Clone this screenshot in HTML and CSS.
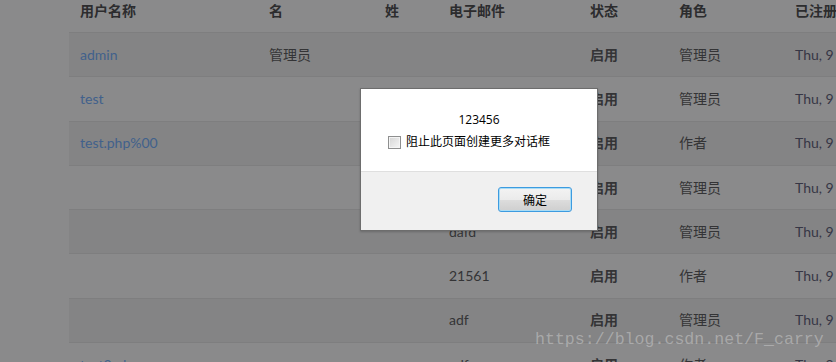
FILE: index.html
```html
<!DOCTYPE html>
<html lang="zh-CN">
<head>
<meta charset="utf-8">
<title>用户</title>
<link rel="stylesheet" href="styles.css">
</head>
<body>
<div class="page">
  <div class="table">
    <div class="row head">
      <div class="c c1">用户名称</div>
      <div class="c c2">名</div>
      <div class="c c3">姓</div>
      <div class="c c4">电子邮件</div>
      <div class="c c5">状态</div>
      <div class="c c6">角色</div>
      <div class="c c7">已注册</div>
    </div>
    <div class="row odd">
      <div class="c c1"><a class="link">admin</a></div>
      <div class="c c2">管理员</div>
      <div class="c c3"></div>
      <div class="c c4"></div>
      <div class="c c5 b">启用</div>
      <div class="c c6">管理员</div>
      <div class="c c7 date">Thu, 9</div>
    </div>
    <div class="row">
      <div class="c c1"><a class="link">test</a></div>
      <div class="c c2"></div>
      <div class="c c3"></div>
      <div class="c c4"></div>
      <div class="c c5 b">启用</div>
      <div class="c c6">管理员</div>
      <div class="c c7 date">Thu, 9</div>
    </div>
    <div class="row odd">
      <div class="c c1"><a class="link">test.php%00</a></div>
      <div class="c c2"></div>
      <div class="c c3"></div>
      <div class="c c4"></div>
      <div class="c c5 b">启用</div>
      <div class="c c6">作者</div>
      <div class="c c7 date">Thu, 9</div>
    </div>
    <div class="row">
      <div class="c c1"></div>
      <div class="c c2"></div>
      <div class="c c3"></div>
      <div class="c c4"></div>
      <div class="c c5 b">启用</div>
      <div class="c c6">管理员</div>
      <div class="c c7 date">Thu, 9</div>
    </div>
    <div class="row odd">
      <div class="c c1"></div>
      <div class="c c2"></div>
      <div class="c c3"></div>
      <div class="c c4">dafd</div>
      <div class="c c5 b">启用</div>
      <div class="c c6">管理员</div>
      <div class="c c7 date">Thu, 9</div>
    </div>
    <div class="row">
      <div class="c c1"></div>
      <div class="c c2"></div>
      <div class="c c3"></div>
      <div class="c c4">21561</div>
      <div class="c c5 b">启用</div>
      <div class="c c6">作者</div>
      <div class="c c7 date">Thu, 9</div>
    </div>
    <div class="row odd">
      <div class="c c1"></div>
      <div class="c c2"></div>
      <div class="c c3"></div>
      <div class="c c4">adf</div>
      <div class="c c5 b">启用</div>
      <div class="c c6">管理员</div>
      <div class="c c7 date">Thu, 9</div>
    </div>
    <div class="row">
      <div class="c c1"><a class="link">test2ad</a></div>
      <div class="c c2"></div>
      <div class="c c3"></div>
      <div class="c c4">adf</div>
      <div class="c c5 b">启用</div>
      <div class="c c6">作者</div>
      <div class="c c7 date">Thu, 9</div>
    </div>
  </div>

  <div class="watermark">https://blog.csdn.net/F_carry</div>

  <div class="dialog">
    <div class="dlg-body">
      <div class="msg">123456</div>
      <label class="chk"><span class="box"></span><span>阻止此页面创建更多对话框</span></label>
    </div>
    <div class="dlg-foot">
      <button class="btn">确定</button>
    </div>
  </div>
</div>
</body>
</html>
```

FILE: styles.css
```css
html, body {
  margin: 0;
  padding: 0;
  width: 836px;
  height: 362px;
  overflow: hidden;
  background: #8a8a8b;
}
.page {
  position: relative;
  width: 836px;
  height: 362px;
  overflow: hidden;
  padding-left: 69px;
  box-sizing: border-box;
  font-family: Lato, "Noto Sans CJK SC", sans-serif;
  font-size: 14px;
  color: #343436;
}
.table {
  width: 767px;
}
.row {
  display: flex;
  height: 44.3px;
  box-sizing: border-box;
  border-top: 1px solid #7e7e7f;
  align-items: center;
  white-space: nowrap;
}
.row.odd {
  background: #848485;
}
.row.head {
  height: 32px;
  border-top: 0;
  align-items: flex-start;
  padding-top: 1px;
  font-weight: bold;
  color: #2c2c2e;
}
.c {
  padding-left: 11px;
  box-sizing: border-box;
  line-height: 20px;
  flex: none;
  overflow: hidden;
}
.c1 { width: 189px; }
.c2 { width: 116px; }
.c3 { width: 64px; }
.c4 { width: 141px; }
.c5 { width: 89px; }
.c6 { width: 116px; }
.c7 { width: 52px; overflow: visible; }
.b { font-weight: bold; }
.link { color: #41618c; }
.date { color: #363645; }

.watermark {
  position: absolute;
  left: 535px;
  top: 329px;
  font-family: "Liberation Mono", monospace;
  font-size: 16.6px;
  line-height: 22px;
  color: rgba(215, 215, 215, 0.45);
  white-space: nowrap;
}

.dialog {
  position: absolute;
  left: 360px;
  top: 88px;
  width: 238px;
  height: 143px;
  box-sizing: border-box;
  border: 1px solid #6d6d6d;
  background: #f0f0f0;
  display: flex;
  flex-direction: column;
  font-family: "Open Sans", "Noto Sans CJK SC", sans-serif;
  font-size: 12px;
  color: #000;
  box-shadow: 0 1px 2px rgba(0,0,0,0.2);
}
.dlg-body {
  height: 83px;
  background: #fff;
  border-bottom: 1px solid #dfdfdf;
  display: flex;
  flex-direction: column;
  align-items: center;
  padding-top: 23px;
  box-sizing: border-box;
}
.msg {
  line-height: 16px;
}
.chk {
  align-self: flex-start;
  margin-left: 27px;
  margin-top: 6px;
  display: flex;
  align-items: center;
  gap: 5px;
  line-height: 16px;
}
.box {
  width: 11px;
  height: 11px;
  border: 1px solid #8e8f8f;
  background: linear-gradient(135deg, #d4d4d4, #f6f6f6);
  box-shadow: inset 0 0 0 1px #f4f4f4;
}
.dlg-foot {
  flex: 1;
  display: flex;
  justify-content: flex-end;
  align-items: flex-start;
  padding: 15px 25px 0 0;
}
.btn {
  width: 74px;
  height: 25px;
  border: 1px solid #3c9be0;
  border-radius: 3px;
  background: linear-gradient(#f3f3f3 0%, #ebebeb 50%, #dddddd 51%, #cfcfcf 100%);
  box-shadow: inset 0 0 0 1px #a9dcf5;
  font-family: "Noto Sans CJK SC", sans-serif;
  font-size: 12px;
  color: #000;
  padding: 0;
  line-height: 16px;
}
```
